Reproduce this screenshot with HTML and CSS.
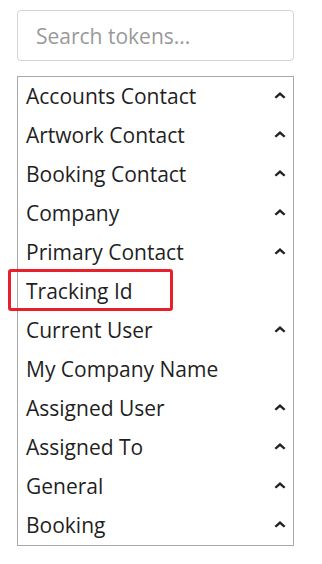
FILE: index.html
```html
<!DOCTYPE html>
<html>
<head>
<meta charset="utf-8">
<link rel="stylesheet" href="styles.css">
</head>
<body>
<div class="panel">
  <input class="search" type="text" placeholder="Search tokens...">
  <div class="list">
    <div class="row"><span>Accounts Contact</span><svg class="chev" viewBox="0 0 12 7"><path d="M0.5 5 L6 0 L11.5 5 L9.8 6.6 L6 3.2 L2.2 6.6 Z"/></svg></div>
    <div class="row"><span>Artwork Contact</span><svg class="chev" viewBox="0 0 12 7"><path d="M0.5 5 L6 0 L11.5 5 L9.8 6.6 L6 3.2 L2.2 6.6 Z"/></svg></div>
    <div class="row"><span>Booking Contact</span><svg class="chev" viewBox="0 0 12 7"><path d="M0.5 5 L6 0 L11.5 5 L9.8 6.6 L6 3.2 L2.2 6.6 Z"/></svg></div>
    <div class="row"><span>Company</span><svg class="chev" viewBox="0 0 12 7"><path d="M0.5 5 L6 0 L11.5 5 L9.8 6.6 L6 3.2 L2.2 6.6 Z"/></svg></div>
    <div class="row"><span>Primary Contact</span><svg class="chev" viewBox="0 0 12 7"><path d="M0.5 5 L6 0 L11.5 5 L9.8 6.6 L6 3.2 L2.2 6.6 Z"/></svg></div>
    <div class="row highlight"><span>Tracking Id</span></div>
    <div class="row"><span>Current User</span><svg class="chev" viewBox="0 0 12 7"><path d="M0.5 5 L6 0 L11.5 5 L9.8 6.6 L6 3.2 L2.2 6.6 Z"/></svg></div>
    <div class="row"><span>My Company Name</span></div>
    <div class="row"><span>Assigned User</span><svg class="chev" viewBox="0 0 12 7"><path d="M0.5 5 L6 0 L11.5 5 L9.8 6.6 L6 3.2 L2.2 6.6 Z"/></svg></div>
    <div class="row"><span>Assigned To</span><svg class="chev" viewBox="0 0 12 7"><path d="M0.5 5 L6 0 L11.5 5 L9.8 6.6 L6 3.2 L2.2 6.6 Z"/></svg></div>
    <div class="row"><span>General</span><svg class="chev" viewBox="0 0 12 7"><path d="M0.5 5 L6 0 L11.5 5 L9.8 6.6 L6 3.2 L2.2 6.6 Z"/></svg></div>
    <div class="row"><span>Booking</span><svg class="chev" viewBox="0 0 12 7"><path d="M0.5 5 L6 0 L11.5 5 L9.8 6.6 L6 3.2 L2.2 6.6 Z"/></svg></div>
  </div>
</div>
</body>
</html>
```
FILE: styles.css
```css
html, body {
  margin: 0;
  padding: 0;
  background: #fff;
}
body {
  font-family: "Open Sans", "Liberation Sans", sans-serif;
  color: #1f1f1f;
}
.panel {
  display: flex;
  flex-direction: column;
  gap: 15px;
  padding: 10px 28px 0 17px;
}
.search {
  box-sizing: border-box;
  height: 51px;
  width: 100%;
  margin: 0;
  border: 1px solid #d4d4d4;
  border-radius: 4px;
  padding: 0 18px;
  font-family: "Open Sans", "Liberation Sans", sans-serif;
  font-size: 21px;
  color: #222;
  outline: none;
}
.search::placeholder {
  color: #999;
}
.list {
  position: relative;
  border: 1px solid #a9a9a9;
  display: flex;
  flex-direction: column;
}
.row {
  position: relative;
  height: 39px;
  display: flex;
  align-items: center;
  justify-content: space-between;
  padding: 0 7px 0 8px;
  font-size: 21px;
  line-height: 1;
}
.chev {
  width: 12px;
  height: 7px;
  margin-top: -3px;
}
.chev path {
  fill: #222;
}
.highlight::after {
  content: "";
  position: absolute;
  left: -10px;
  top: -3px;
  width: 159px;
  height: 36px;
  border: 3px solid #e8202c;
  border-radius: 3px;
}
```
